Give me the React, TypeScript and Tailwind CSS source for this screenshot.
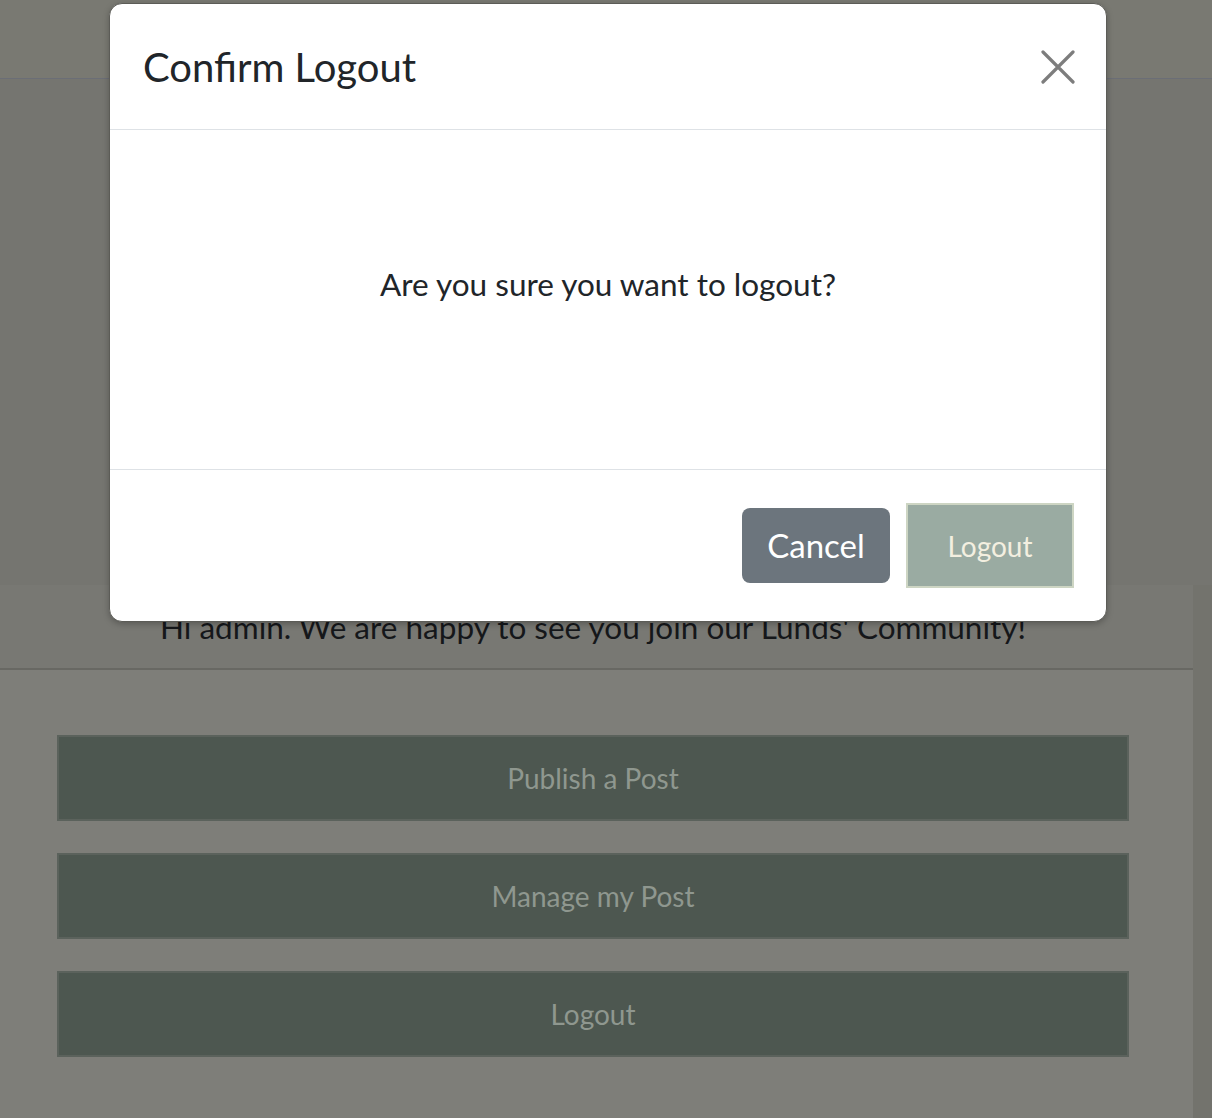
const actions = ["Publish a Post", "Manage my Post", "Logout"];

export default function App() {
  return (
    <div className="relative h-[1118px] w-[1212px] overflow-hidden bg-[#757570] font-['Lato','Noto_Sans',sans-serif]">
      <header className="h-[79px] border-b border-[#6b6e76] bg-[#797972]" />

      <div className="h-[506px]" />

      <div className="flex">
        <section className="w-[1193px] bg-[#7e7e79]">
          <div className="flex h-[85px] items-center justify-center border-b-2 border-[#686863] bg-[#787873] pr-[7px] pt-[3px] text-[31.5px] text-[#15171a]">
            Hi admin. We are happy to see you join our Lunds&apos; Community!
          </div>

          <div className="flex flex-col gap-8 pb-16 pl-[57px] pr-[64px] pt-[65px]">
            {actions.map((label) => (
              <button
                key={label}
                className="flex h-[86px] items-center justify-center border-2 border-[#5b625c] bg-[#4d5750] text-[28px] text-[#8f978f]"
              >
                {label}
              </button>
            ))}
          </div>
        </section>

        <div className="flex-1 bg-[#73736d]" />
      </div>

      {/* modal */}
      <div className="absolute left-[109px] top-[3px] flex h-[619px] w-[998px] flex-col overflow-hidden rounded-[13px] border border-[#5c5c57] bg-white shadow-[0_2px_6px_rgba(0,0,0,0.25)]">
        <div className="flex h-[126px] items-center justify-between border-b border-[#dee2e6] pl-[33px] pr-[31px]">
          <h1 className="text-[40px] leading-none text-[#212529]">
            Confirm Logout
          </h1>
          <button className="text-[#7d7d7d]">
            <svg width="34" height="34" viewBox="0 0 34 34" fill="none">
              <path
                d="M2 2L32 32M32 2L2 32"
                stroke="currentColor"
                strokeWidth="3.2"
                strokeLinecap="round"
              />
            </svg>
          </button>
        </div>

        <div className="flex h-[340px] justify-center border-b border-[#dee2e6] pt-[132px]">
          <p className="text-[31.5px] leading-[45px] text-[#212529]">
            Are you sure you want to logout?
          </p>
        </div>

        <div className="flex flex-1 items-center justify-end gap-4 pr-[32px]">
          <button className="h-[75px] w-[148px] rounded-[8px] bg-[#6c757d] text-[33px] text-white">
            Cancel
          </button>
          <button className="h-[85px] w-[168px] border-2 border-[#cdd5c3] bg-[#9aaba2] text-[28px] text-[#f3efe0]">
            Logout
          </button>
        </div>
      </div>
    </div>
  );
}
